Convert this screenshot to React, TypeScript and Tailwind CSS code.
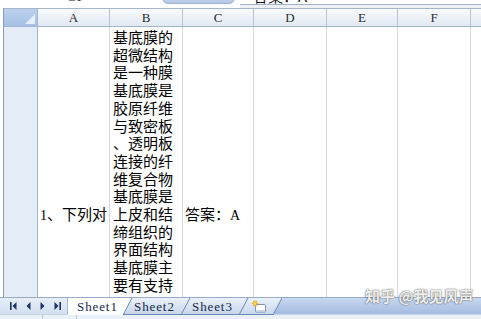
import React from "react";

const LINES_B = [
  "基底膜的",
  "超微结构",
  "是一种膜",
  "基底膜是",
  "胶原纤维",
  "与致密板",
  "、透明板",
  "连接的纤",
  "维复合物",
  "基底膜是",
  "上皮和结",
  "缔组织的",
  "界面结构",
  "基底膜主",
  "要有支持",
];

const COLS = [
  { k: "A", w: "w-[72px]" },
  { k: "B", w: "w-[73px]" },
  { k: "C", w: "w-[71px]" },
  { k: "D", w: "w-[73px]" },
  { k: "E", w: "w-[71px]" },
  { k: "F", w: "w-[73px]" },
];

function Tab({
  w,
  label,
  active,
  first,
  last,
  textOffset,
  children,
}: {
  w: number;
  label?: string;
  active?: boolean;
  first?: boolean;
  last?: boolean;
  textOffset: number;
  children?: React.ReactNode;
}) {
  const s = 9;
  const pts = first
    ? `0,0 ${w},0 ${w - s},17 0,17`
    : `${s},0 ${w},0 ${w - s},17 0,17`;
  return (
    <div
      className={`relative h-[17px] shrink-0 ${first ? "" : "-ml-[9px]"}`}
      style={{ width: w }}
    >
      <svg className="absolute inset-0" width={w} height={17} viewBox={`0 0 ${w} 17`}>
        <defs>
          <linearGradient id="tabg" x1="0" y1="0" x2="0" y2="1">
            <stop offset="0" stopColor="#eaf1fa" />
            <stop offset="1" stopColor="#c6d6ec" />
          </linearGradient>
        </defs>
        <polygon points={pts} fill={active ? "#ffffff" : "url(#tabg)"} />
        {!active && <line x1="0" y1="16.5" x2={w - s} y2="16.5" stroke="#6d88b3" strokeWidth="1" />}
        {!first && <line x1="0" y1="17" x2={s} y2="0" stroke="#6d88b3" strokeWidth="1" />}
        {last && <line x1={w - s} y1="17" x2={w} y2="0" stroke="#6d88b3" strokeWidth="1" />}
      </svg>
      <div
        className="relative h-full flex items-center font-['Liberation_Serif',serif] text-[13px] tracking-[0.9px] text-[#17294a]"
        style={{ paddingLeft: textOffset }}
      >
        {label}
        {children}
      </div>
    </div>
  );
}

export default function App() {
  return (
    <div className="relative w-[481px] h-[319px] overflow-hidden bg-white">
      {/* top strip (formula bar bottom) */}
      <div className="flex h-[8px]">
        <div className="w-[240px] h-full flex items-start overflow-hidden bg-white">
          <div className="ml-[67px] h-[4px] overflow-hidden">
            <div className="-mt-[10px] font-['Liberation_Serif',serif] text-[13px] leading-[14px] text-[#222]">
              C1
            </div>
          </div>
          <div className="ml-[80px] w-[73px] h-[11px] -mt-[7px] rounded-b-[6px] bg-linear-to-b from-[#d3e0f1] to-[#b2c7e4] border border-[#9cb2d2]" />
        </div>
        <div className="flex-1 flex flex-col">
          <div className="h-[4px] overflow-hidden bg-white pl-[13px]">
            <div className="-mt-[12px] font-['Noto_Sans_CJK_SC',sans-serif] text-[15px] leading-[15px] text-[#111]">
              答案：A
            </div>
          </div>
          <div className="h-[1px] bg-[#a3b3ca]" />
          <div className="flex-1 bg-[#eef2f7]" />
        </div>
      </div>

      {/* grid */}
      <div className="flex h-[289px]">
        <div className="w-[3px] bg-white" />
        <div className="w-[1px] bg-[#8d9db5]" />
        <div className="flex-1 flex flex-col">
          {/* header row */}
          <div className="flex h-[19px] border-t border-b border-t-[#a4b4c9] border-b-[#9eb6ce]">
            <div className="relative w-[34px] border-r border-[#9eb6ce] bg-linear-to-b from-[#bcd0ec] to-[#a5c0e6]">
              <svg className="absolute right-[2px] bottom-[2px]" width="10" height="10" viewBox="0 0 10 10">
                <polygon points="10,0 10,10 0,10" fill="#e6eef9" />
              </svg>
            </div>
            {COLS.map((c) => (
              <div
                key={c.k}
                className={`${c.w} flex items-center justify-center border-r border-[#b4c5da] bg-linear-to-b from-[#f8fafd] to-[#e2e9f2] font-['Liberation_Serif',serif] text-[13px] text-[#2b2b2b]`}
              >
                {c.k}
              </div>
            ))}
            <div className="flex-1 bg-linear-to-b from-[#f8fafd] to-[#e2e9f2]" />
          </div>
          {/* body row */}
          <div className="flex flex-1 overflow-hidden font-['Noto_Sans_CJK_SC',sans-serif] text-[15px] leading-[17.7px] text-black">
            <div className="w-[34px] border-r border-[#9eb6ce] bg-[#e4ecf7]" />
            <div className="w-[72px] border-r border-[#d0d7e5] pl-[2px] pt-[178px] whitespace-nowrap overflow-hidden">
              <span className="font-['Liberation_Serif',serif] text-[14px]">1</span>、下列对
            </div>
            <div className="w-[73px] border-r border-[#d0d7e5] pl-[3px] pt-[1px] overflow-hidden">
              {LINES_B.map((l, i) => (
                <div key={i} className="whitespace-nowrap">
                  {l}
                </div>
              ))}
            </div>
            <div className="w-[71px] border-r border-[#d0d7e5] pl-[2px] pt-[178px] whitespace-nowrap overflow-hidden">
              答案：<span className="font-['Liberation_Serif',serif] text-[14px]">A</span>
            </div>
            <div className="w-[73px] border-r border-[#d0d7e5]" />
            <div className="w-[71px] border-r border-[#d0d7e5]" />
            <div className="w-[73px] border-r border-[#d0d7e5]" />
            <div className="flex-1" />
          </div>
        </div>
      </div>

      {/* sheet tab bar */}
      <div className="flex h-[17px] bg-linear-to-b from-[#c8d8ee] to-[#a3bce0] border-t border-[#97abc9]">
        <div className="w-[68px] h-full flex items-center bg-linear-to-b from-[#e6eef9] to-[#d3dff0] border-r border-[#a8bad4] pl-[10px]">
          <svg width="7" height="8" viewBox="0 0 7 8">
            <rect x="0" y="0" width="1.6" height="8" fill="#1d3560" />
            <polygon points="6.5,0 6.5,8 2.5,4" fill="#1d3560" />
          </svg>
          <svg className="ml-[9px]" width="5" height="8" viewBox="0 0 5 8">
            <polygon points="4.5,0 4.5,8 0.5,4" fill="#1d3560" />
          </svg>
          <svg className="ml-[9px]" width="5" height="8" viewBox="0 0 5 8">
            <polygon points="0.5,0 0.5,8 4.5,4" fill="#1d3560" />
          </svg>
          <svg className="ml-[9px]" width="7" height="8" viewBox="0 0 7 8">
            <polygon points="0.5,0 0.5,8 4.5,4" fill="#1d3560" />
            <rect x="5.4" y="0" width="1.6" height="8" fill="#1d3560" />
          </svg>
        </div>
        <Tab w={64} label="Sheet1" active first textOffset={9} />
        <Tab w={67} label="Sheet2" textOffset={11} />
        <Tab w={67} label="Sheet3" textOffset={11} />
        <Tab w={43} last textOffset={12}>
          <svg width="16" height="13" viewBox="0 0 16 13">
            <rect x="4.5" y="4.5" width="10" height="7.5" rx="1" fill="#ffffff" stroke="#7d93b6" />
            <rect x="5.5" y="10" width="8" height="1.5" fill="#c9d5e6" />
            <g stroke="#f0a818" strokeWidth="1.2" strokeLinecap="round">
              <line x1="4" y1="0.8" x2="4" y2="6.2" />
              <line x1="1.3" y1="3.5" x2="6.7" y2="3.5" />
              <line x1="2.2" y1="1.7" x2="5.8" y2="5.3" />
              <line x1="5.8" y1="1.7" x2="2.2" y2="5.3" />
            </g>
            <circle cx="4" cy="3.5" r="1.3" fill="#ffe066" />
          </svg>
        </Tab>
        <div className="flex-1" />
      </div>

      {/* status strip */}
      <div className="flex h-[5px] bg-[#eaf0f7] border-t border-[#c7d3e3]">
        <div className="w-[43px] border-r border-[#b7c5d8]" />
        <div className="w-[34px] border-r border-[#b7c5d8]" />
      </div>

      {/* watermark */}
      <div className="absolute left-[365px] top-[287px] font-['Noto_Sans_CJK_SC',sans-serif] text-[15px] font-bold leading-[17px] text-white/90 whitespace-nowrap [text-shadow:0_0_1px_rgba(60,60,60,0.9),0_0_2px_rgba(60,60,60,0.5)]">
        知乎 @我见风声
      </div>
    </div>
  );
}
